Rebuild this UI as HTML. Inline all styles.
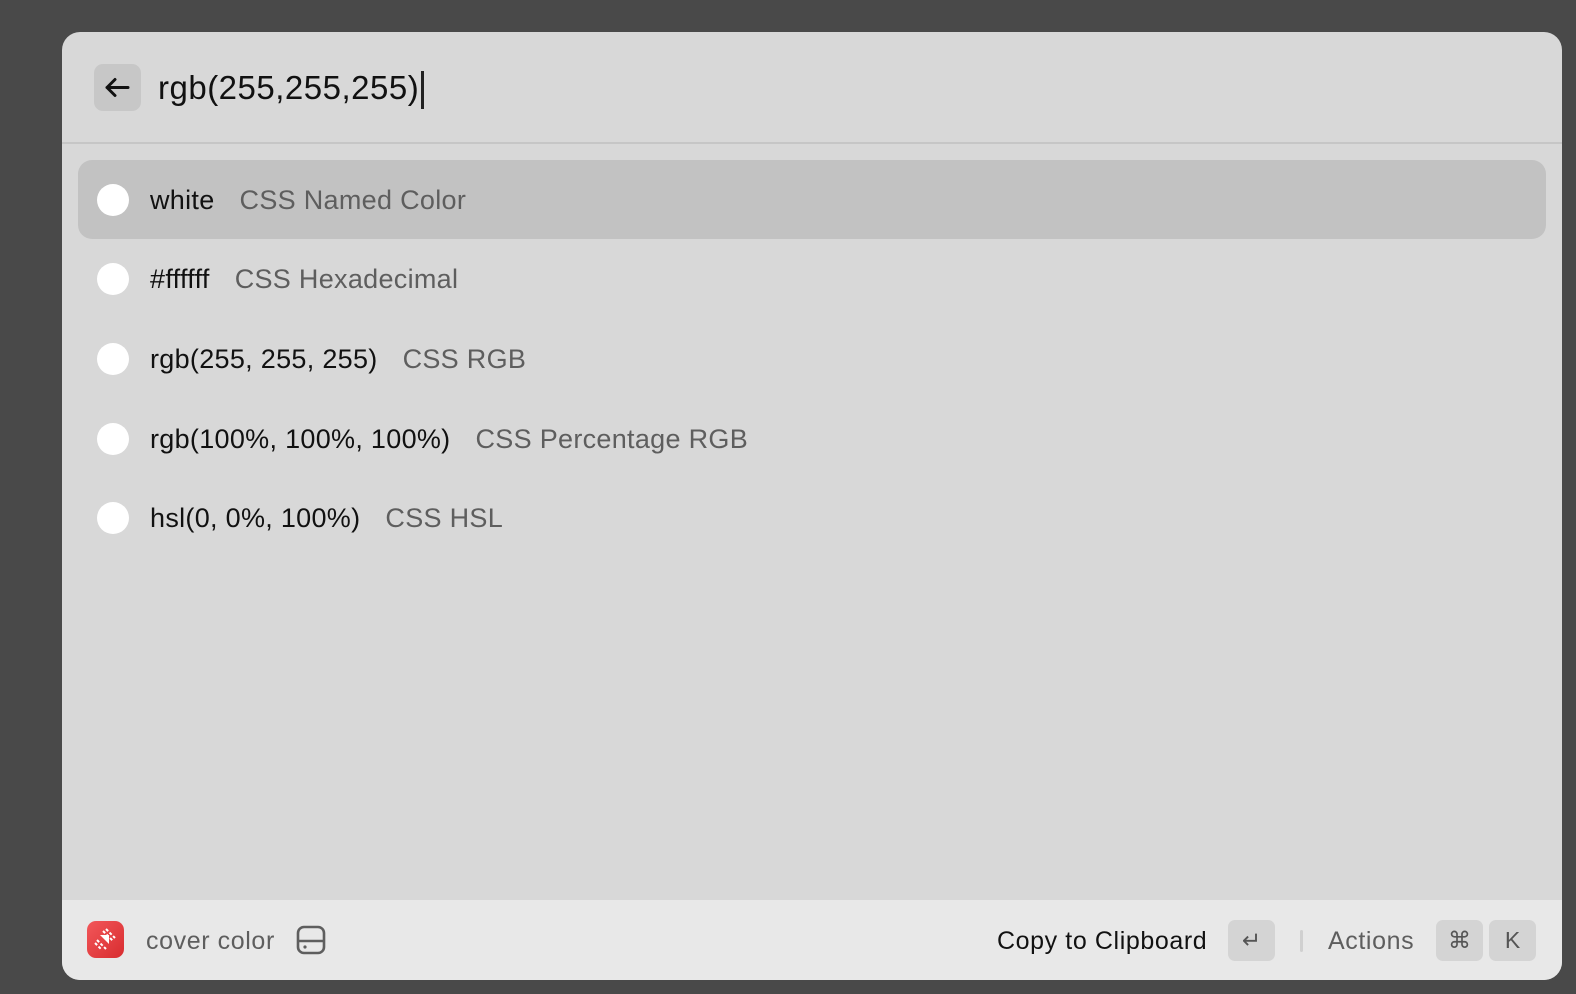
<!DOCTYPE html>
<html><head><style>
body{margin:0;width:1576px;height:994px;background:#494949;font-family:"Liberation Sans",sans-serif;position:relative;overflow:hidden}
.win{position:absolute;left:62px;top:32px;width:1500px;height:948px;background:#d8d8d8;border-radius:18px;overflow:hidden}
.hdr{position:absolute;left:0;top:0;right:0;height:110px;border-bottom:2px solid #c6c6c6}
.back{position:absolute;left:32px;top:32px;width:47px;height:47px;border-radius:9px;background:#c7c7c7}
.inp{position:absolute;left:96px;top:34px;font-size:33px;letter-spacing:0.5px;color:#111;line-height:44px}
.caret{display:inline-block;width:3px;height:38px;background:#222;vertical-align:middle;margin-left:2px}
.row{position:absolute;left:16px;width:1468px;height:79px;border-radius:14px}
.row.sel{background:#c2c2c2}
.dot{position:absolute;left:19px;top:24px;width:32px;height:32px;border-radius:50%;background:#fff}
.t{position:absolute;left:72px;top:23px;font-size:27px;letter-spacing:0.3px;color:#111;white-space:nowrap;line-height:34px}
.t span{color:#5e5e5e;margin-left:25px}
.ftr{position:absolute;left:0;right:0;top:868px;height:80px;background:#e8e8e8}
.ft{position:absolute;top:24px;font-size:25px;letter-spacing:0.6px;line-height:34px;white-space:nowrap}
.key{position:absolute;top:20px;width:47px;height:41px;border-radius:7px;background:#d4d4d4;color:#555;font-size:23px;text-align:center;line-height:41px}
</style></head><body>
<div class="win">
 <div class="hdr">
  <div class="back"><svg width="47" height="47" viewBox="0 0 47 47"><path d="M34 23.5H13M21 15.5l-8 8 8 8" stroke="#111" stroke-width="3" fill="none" stroke-linecap="round" stroke-linejoin="round"/></svg></div>
  <div class="inp">rgb(255,255,255)<span class="caret"></span></div>
 </div>
 <div class="row sel" style="top:128px"><div class="dot"></div><div class="t">white<span>CSS Named Color</span></div></div>
 <div class="row" style="top:207px"><div class="dot"></div><div class="t">#ffffff<span>CSS Hexadecimal</span></div></div>
 <div class="row" style="top:287px"><div class="dot"></div><div class="t">rgb(255, 255, 255)<span>CSS RGB</span></div></div>
 <div class="row" style="top:367px"><div class="dot"></div><div class="t">rgb(100%, 100%, 100%)<span>CSS Percentage RGB</span></div></div>
 <div class="row" style="top:446px"><div class="dot"></div><div class="t">hsl(0, 0%, 100%)<span>CSS HSL</span></div></div>
 <div class="ftr">
  <div style="position:absolute;left:25px;top:21px;width:37px;height:37px;border-radius:9px;background:linear-gradient(135deg,#f2575a,#d82c2f)"><svg width="37" height="37" viewBox="0 0 37 37"><path d="M13 14l9 0 0 9z" fill="#fff"/><path d="M10 19l9 9M8 22l7 7M16 10l10 10M19 8l9 9" stroke="#fff" stroke-width="2" stroke-dasharray="3 2"/></svg></div>
  <div class="ft" style="left:84px;color:#5e5e5e">cover color</div>
  <svg style="position:absolute;left:234px;top:24px" width="30" height="32" viewBox="0 0 30 32"><rect x="2" y="3" width="26" height="26" rx="6" fill="none" stroke="#5e5e5e" stroke-width="2.6"/><path d="M2 17h26" stroke="#5e5e5e" stroke-width="2.6"/><circle cx="9" cy="23" r="1.6" fill="#5e5e5e"/></svg>
  <div class="ft" style="left:935px;color:#111">Copy to Clipboard</div>
  <div class="key" style="left:1166px">↵</div>
  <div style="position:absolute;left:1238px;top:30px;width:3px;height:22px;background:#d0d0d0;border-radius:2px"></div>
  <div class="ft" style="left:1266px;color:#5e5e5e">Actions</div>
  <div class="key" style="left:1374px">⌘</div>
  <div class="key" style="left:1427px">K</div>
 </div>
</div>
</body></html>
